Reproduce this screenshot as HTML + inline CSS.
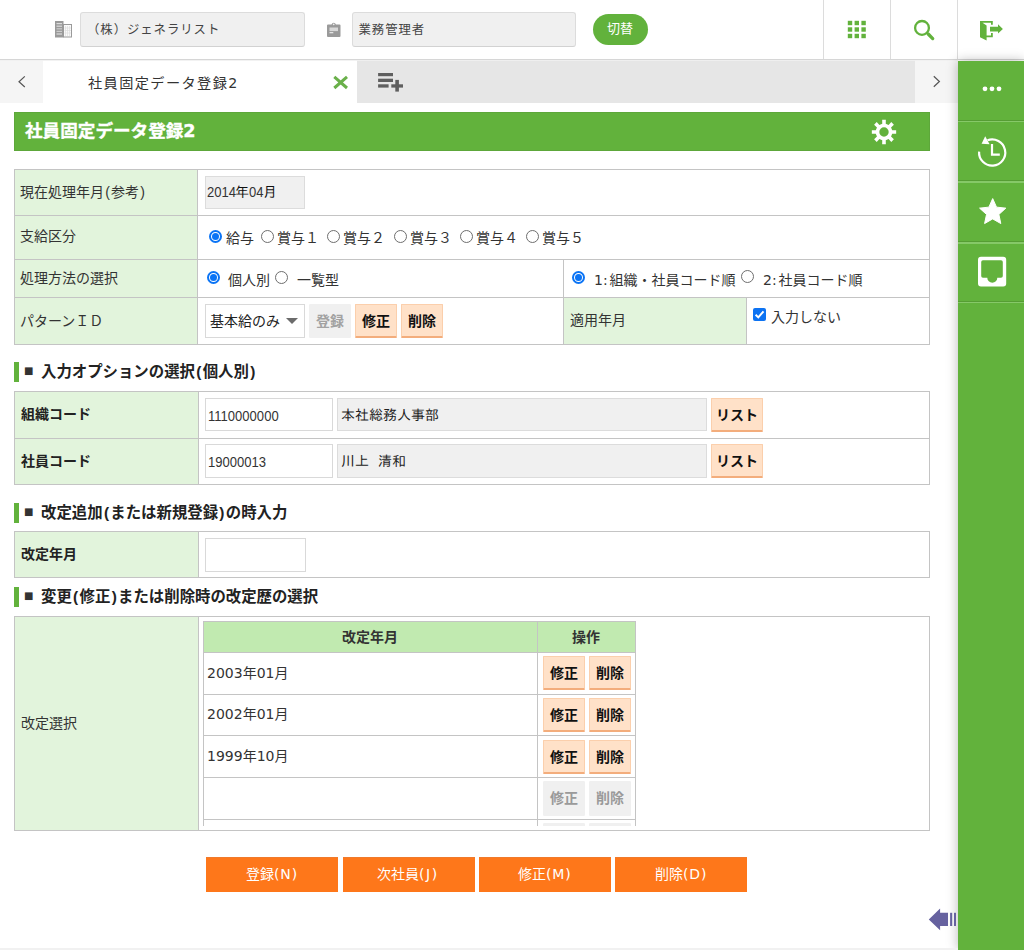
<!DOCTYPE html>
<html lang="ja">
<head>
<meta charset="utf-8">
<title>社員固定データ登録2</title>
<style>
*{box-sizing:border-box;margin:0;padding:0}
html,body{width:1024px;height:950px;overflow:hidden;background:#fff}
body{font-family:"Liberation Sans","Noto Sans CJK JP",sans-serif;font-size:14px;color:#333;position:relative}
.abs{position:absolute}
.t{position:absolute;white-space:nowrap;line-height:1}
/* header */
#hdr{left:0;top:0;width:1024px;height:60px;background:#fff;border-bottom:1px solid #d6d6d6}
.hin{position:absolute;top:12px;height:35px;background:#f0f0f0;border:1px solid #dcdcdc;border-bottom-color:#d2d2d2;border-radius:3px}
.vline{position:absolute;top:0;width:1px;height:59px;background:#dcdcdc}
#sw{left:593px;top:14px;width:55px;height:31px;border-radius:15.5px;background:#62b23c}
/* tabs */
#tabs{left:0;top:60px;width:958px;height:43px;background:#e6e6e6}
#tl{left:0;top:60px;width:43px;height:43px;background:#f5f5f5}
#tr{left:915px;top:60px;width:43px;height:43px;background:#f5f5f5}
#tab1{left:43px;top:60px;width:314px;height:43px;background:#fff}
/* sidebar */
#side{left:958px;top:61px;width:66px;height:889px;background:#62b23c;box-shadow:0 0 11px rgba(0,0,0,0.28)}
#sideshadow{left:938px;top:61px;width:20px;height:889px;background:linear-gradient(to right,rgba(0,0,0,0),rgba(0,0,0,0.10))}
.sdiv{position:absolute;left:958px;width:66px;height:1px;background:#86c868}
.sdiv.dk{background:#569d34}
/* title bar */
#ttl{left:14px;top:112px;width:916px;height:39px;background:#62b23c;border:1px solid #5da73a}
/* tables */
.box{position:absolute;border:1px solid #c4c4c4;background:#fff}
.lab{position:absolute;background:#e2f4dc}
.hl{position:absolute;height:1px;background:#c4c4c4}
.vl{position:absolute;width:1px;background:#c4c4c4}
.inp{position:absolute;background:#fff;border:1px solid #d9d9d9}
.inp.ro{background:#f0f0f0;border-color:#dcdcdc}
.pb{position:absolute;background:#ffe1c8;border:1px solid #fbcfac;border-bottom:2px solid #f3ad7c;border-radius:1px}
.pb.dis{background:#f0f0f0;border:1px solid #f0f0f0}
.ob{position:absolute;top:857px;width:132px;height:35px;background:#fe771a;border-top:1px solid #f07a2c}
.sec{position:absolute;left:14px;width:5px;height:20px;background:#62b23c}
.radio{position:absolute;width:13px;height:13px;border-radius:50%;border:1px solid #6e6e6e;background:#fff}
.radio.on{border:2px solid #0b74f5}
.radio.on::after{content:"";position:absolute;left:1px;top:1px;width:7px;height:7px;border-radius:50%;background:#0b74f5}
.b{font-weight:bold}
.q{letter-spacing:0.9px}
.d{display:inline-block;font-family:"Liberation Sans",sans-serif;font-size:15px;transform:scaleX(0.87);transform-origin:0 50%;color:#333;letter-spacing:0;vertical-align:baseline}
.v{font-family:"DejaVu Sans","Noto Sans CJK JP",sans-serif}
.g{font-family:"IPAGothic","Noto Sans CJK JP",monospace;font-size:14px;color:#222}
.p{display:inline-block;padding:0 1.2px}
.p2{display:inline-block;padding:0 1.3px}
.sq{font-size:10px;color:#333;font-family:"DejaVu Sans",sans-serif}
</style>
</head>
<body>
<!-- HEADER -->
<div id="hdr" class="abs"></div>
<div class="hin" style="left:80px;width:225px"></div>
<div class="hin" style="left:352px;width:224px"></div>
<div class="t" style="left:87px;top:23.5px;font-size:12.4px;letter-spacing:0.93px;color:#444">（株）ジェネラリスト</div>
<div class="t" style="left:358.5px;top:23.5px;font-size:12.4px;letter-spacing:0.93px;color:#444">業務管理者</div>
<div id="sw" class="abs"></div>
<div class="t" style="left:607px;top:22px;font-size:13px;color:#fff">切替</div>
<div class="vline" style="left:823px"></div>
<div class="vline" style="left:890px"></div>
<div class="vline" style="left:957px"></div>

<!-- TABS -->
<div id="tabs" class="abs"></div>
<div id="tl" class="abs"></div>
<div id="tr" class="abs"></div>
<div id="tab1" class="abs"></div>
<div class="abs" style="left:0;top:60px;width:958px;height:1px;background:rgba(240,240,240,0.85)"></div>
<div class="t v" style="left:88px;top:76px;font-size:14.2px;letter-spacing:1.4px;color:#333">社員固定データ登録2</div>

<!-- SIDEBAR -->
<div id="side" class="abs"></div>
<div class="sdiv dk" style="top:120px"></div><div class="sdiv" style="top:121px;height:1px"></div>
<div class="sdiv dk" style="top:180px"></div><div class="sdiv" style="top:181px;height:2px"></div>
<div class="sdiv dk" style="top:241px"></div><div class="sdiv" style="top:242px;height:2px"></div>
<div class="sdiv dk" style="top:301px"></div><div class="sdiv" style="top:302px;height:1px"></div>

<!-- TITLE BAR -->
<div id="ttl" class="abs"></div>
<div class="t b v" style="left:25px;top:123px;font-size:17.6px;color:#fff;-webkit-text-stroke:0.35px #fff">社員固定データ登録2</div>


<!-- FORM TABLE 1 -->
<div class="box" style="left:14px;top:169px;width:916px;height:176px"></div>
<div class="lab" style="left:15px;top:170px;width:182px;height:174px"></div>
<div class="vl" style="left:197px;top:170px;height:174px"></div>
<div class="hl" style="left:15px;top:215px;width:914px"></div>
<div class="hl" style="left:15px;top:259px;width:914px"></div>
<div class="hl" style="left:15px;top:297px;width:914px"></div>
<div class="vl" style="left:563px;top:260px;height:84px"></div>
<div class="lab" style="left:564px;top:298px;width:182px;height:46px"></div>
<div class="vl" style="left:746px;top:298px;height:46px"></div>
<div class="t" style="left:20px;top:185px">現在処理年月<span class="p">(</span>参考<span class="p">)</span></div>
<div class="t" style="left:20px;top:229px">支給区分</div>
<div class="t" style="left:20px;top:271px">処理方法の選択</div>
<div class="t" style="left:20px;top:314px">パターンＩＤ</div>
<div class="t" style="left:570px;top:313px">適用年月</div>
<div class="inp ro" style="left:205px;top:176px;width:100px;height:33px"></div>
<div class="t g" style="left:207px;top:184px;color:#111"><span class="d" style="width:28px">2014</span>年<span class="d" style="width:14px">04</span>月</div>
<!-- row 2 radios -->
<div class="radio on" style="left:209px;top:230px"></div><div class="t" style="left:226px;top:231px">給与</div>
<div class="radio" style="left:261px;top:230px"></div><div class="t" style="left:277px;top:231px">賞与１</div>
<div class="radio" style="left:327px;top:230px"></div><div class="t" style="left:343px;top:231px">賞与２</div>
<div class="radio" style="left:394px;top:230px"></div><div class="t" style="left:410px;top:231px">賞与３</div>
<div class="radio" style="left:460px;top:230px"></div><div class="t" style="left:476px;top:231px">賞与４</div>
<div class="radio" style="left:526px;top:230px"></div><div class="t" style="left:542px;top:231px">賞与５</div>
<!-- row 3 radios -->
<div class="radio on" style="left:207px;top:271px"></div><div class="t" style="left:228px;top:273px">個人別</div>
<div class="radio" style="left:275px;top:271px"></div><div class="t" style="left:297px;top:273px">一覧型</div>
<div class="radio on" style="left:572px;top:271px"></div><div class="t v" style="left:594px;top:273px">1<span style="letter-spacing:1.8px">:</span>組織・社員コード順</div>
<div class="radio" style="left:741px;top:270px"></div><div class="t v" style="left:763px;top:273px">2<span style="letter-spacing:1.8px">:</span>社員コード順</div>
<!-- row 4 -->
<div class="inp" style="left:205px;top:304px;width:100px;height:34px"></div>
<div class="t" style="left:210px;top:314px;color:#222">基本給のみ</div>
<div class="abs" style="left:286px;top:318px;width:0;height:0;border-left:6px solid transparent;border-right:6px solid transparent;border-top:6.5px solid #6b6b6b"></div>
<div class="pb dis" style="left:309px;top:304px;width:42px;height:34px"></div><div class="t b" style="left:316px;top:314px;color:#a2a2a2">登録</div>
<div class="pb" style="left:355px;top:304px;width:42px;height:34px"></div><div class="t b" style="left:362px;top:314px;color:#111">修正</div>
<div class="pb" style="left:401px;top:304px;width:42px;height:34px"></div><div class="t b" style="left:408px;top:314px;color:#111">削除</div>
<!-- checkbox -->
<div class="abs" style="left:753px;top:308px;width:13px;height:13px;border-radius:2px;background:#0d73f2"></div>
<svg class="abs" style="left:753px;top:308px" width="13" height="13" viewBox="0 0 13 13"><path d="M2.6 6.8 L5.3 9.4 L10.5 3.4" fill="none" stroke="#fff" stroke-width="2"/></svg>
<div class="t" style="left:771px;top:310px">入力しない</div>

<!-- SECTION 1 -->
<div class="sec" style="top:362px"></div>
<div class="t b sq" style="left:24px;top:366px">■</div><div class="t b" style="left:41px;top:364px;color:#222;font-size:15.4px">入力オプションの選択<span class="p2">(</span>個人別<span class="p2">)</span></div>
<div class="box" style="left:14px;top:391px;width:916px;height:94px"></div>
<div class="lab" style="left:15px;top:392px;width:183px;height:92px"></div>
<div class="vl" style="left:198px;top:392px;height:92px"></div>
<div class="hl" style="left:15px;top:438px;width:914px"></div>
<div class="t b" style="left:21px;top:407px;color:#222">組織コード</div>
<div class="t b" style="left:21px;top:454px;color:#222">社員コード</div>
<div class="inp" style="left:205px;top:398px;width:128px;height:33px"></div>
<div class="t g" style="left:208px;top:408px"><span class="d">1110000000</span></div>
<div class="inp ro" style="left:337px;top:398px;width:370px;height:33px"></div>
<div class="t g" style="left:341px;top:408px">本社総務人事部</div>
<div class="pb" style="left:711px;top:398px;width:52px;height:34px"></div><div class="t b" style="left:716px;top:408px;color:#111">リスト</div>
<div class="inp" style="left:205px;top:444px;width:128px;height:34px"></div>
<div class="t g" style="left:208px;top:454px"><span class="d">19000013</span></div>
<div class="inp ro" style="left:337px;top:444px;width:370px;height:34px"></div>
<div class="t g" style="left:341px;top:454px;word-spacing:2px">川上 清和</div>
<div class="pb" style="left:711px;top:444px;width:52px;height:34px"></div><div class="t b" style="left:716px;top:454px;color:#111">リスト</div>

<!-- SECTION 2 -->
<div class="sec" style="top:503px"></div>
<div class="t b sq" style="left:24px;top:507px">■</div><div class="t b" style="left:41px;top:505px;color:#222;font-size:15.4px">改定追加<span class="p2">(</span>または新規登録<span class="p2">)</span>の時入力</div>
<div class="box" style="left:14px;top:531px;width:916px;height:47px"></div>
<div class="lab" style="left:15px;top:532px;width:183px;height:45px"></div>
<div class="vl" style="left:198px;top:532px;height:45px"></div>
<div class="t b" style="left:21px;top:547px;color:#222">改定年月</div>
<div class="inp" style="left:205px;top:538px;width:101px;height:34px"></div>

<!-- SECTION 3 -->
<div class="sec" style="top:587px"></div>
<div class="t b sq" style="left:24px;top:591px">■</div><div class="t b" style="left:41px;top:589px;color:#222;font-size:15.4px">変更<span class="p2">(</span>修正<span class="p2">)</span>または削除時の改定歴の選択</div>
<div class="box" style="left:14px;top:616px;width:916px;height:215px"></div>
<div class="lab" style="left:15px;top:617px;width:183px;height:213px"></div>
<div class="vl" style="left:198px;top:617px;height:213px"></div>
<div class="t" style="left:21px;top:716px">改定選択</div>
<!-- inner table -->
<div class="abs" style="left:203px;top:621px;width:433px;height:205px;overflow:hidden">
  <div class="abs" style="left:0;top:0;width:433px;height:32px;background:#c1eab0;border:1px solid #c4c4c4"></div>
  <div class="vl" style="left:334px;top:0;height:205px"></div>
  <div class="vl" style="left:432px;top:0;height:205px"></div>
  <div class="vl" style="left:0;top:0;height:205px"></div>
  <div class="hl" style="left:0;top:73px;width:433px"></div>
  <div class="hl" style="left:0;top:114px;width:433px"></div>
  <div class="hl" style="left:0;top:156px;width:433px"></div>
  <div class="hl" style="left:0;top:198px;width:433px"></div>
  <div class="t b" style="left:139px;top:9px;color:#333">改定年月</div>
  <div class="t b" style="left:369px;top:9px;color:#333">操作</div>
  <div class="t v" style="left:4px;top:45px">2003年01月</div>
  <div class="t v" style="left:4px;top:86px">2002年01月</div>
  <div class="t v" style="left:4px;top:128px">1999年10月</div>
  <div class="pb" style="left:340px;top:35px;width:42px;height:34px"></div><div class="t b" style="left:347px;top:45px;color:#111">修正</div>
  <div class="pb" style="left:386px;top:35px;width:42px;height:34px"></div><div class="t b" style="left:393px;top:45px;color:#111">削除</div>
  <div class="pb" style="left:340px;top:77px;width:42px;height:34px"></div><div class="t b" style="left:347px;top:87px;color:#111">修正</div>
  <div class="pb" style="left:386px;top:77px;width:42px;height:34px"></div><div class="t b" style="left:393px;top:87px;color:#111">削除</div>
  <div class="pb" style="left:340px;top:119px;width:42px;height:34px"></div><div class="t b" style="left:347px;top:129px;color:#111">修正</div>
  <div class="pb" style="left:386px;top:119px;width:42px;height:34px"></div><div class="t b" style="left:393px;top:129px;color:#111">削除</div>
  <div class="pb dis" style="left:340px;top:160px;width:42px;height:35px"></div><div class="t b" style="left:347px;top:170px;color:#9a9a9a">修正</div>
  <div class="pb dis" style="left:386px;top:160px;width:42px;height:35px"></div><div class="t b" style="left:393px;top:170px;color:#9a9a9a">削除</div>
  <div class="pb dis" style="left:340px;top:202px;width:42px;height:35px"></div>
  <div class="pb dis" style="left:386px;top:202px;width:42px;height:35px"></div>
</div>

<!-- BOTTOM BUTTONS -->
<div class="ob" style="left:206px"></div><div class="t v" style="left:246px;top:867px;color:#fff;font-size:14px">登録<span class="q">(N)</span></div>
<div class="ob" style="left:343px"></div><div class="t v" style="left:377px;top:867px;color:#fff;font-size:14px">次社員<span class="q" style="letter-spacing:1.6px">(J)</span></div>
<div class="ob" style="left:479px"></div><div class="t v" style="left:518px;top:867px;color:#fff;font-size:14px">修正<span class="q">(M)</span></div>
<div class="ob" style="left:615px"></div><div class="t v" style="left:655px;top:867px;color:#fff;font-size:14px">削除<span class="q">(D)</span></div>

<!-- bottom line -->
<div class="abs" style="left:0;top:948px;width:958px;height:2px;background:#f1f1f1"></div>


<!-- ICONS -->
<svg class="abs" style="left:0;top:0" width="1024" height="950" viewBox="0 0 1024 950">
  <!-- building -->
  <g>
    <rect x="55" y="21" width="8.5" height="16.5" fill="#9a9a9a"/>
    <rect x="56.5" y="23" width="5.5" height="1.2" fill="#ddd"/>
    <rect x="56.5" y="25.6" width="5.5" height="1.2" fill="#ddd"/>
    <rect x="56.5" y="28.2" width="5.5" height="1.2" fill="#ccc"/>
    <rect x="56.5" y="30.8" width="5.5" height="1.2" fill="#ccc"/>
    <rect x="56.5" y="33.4" width="5.5" height="1.2" fill="#ddd"/>
    <rect x="63.5" y="24.5" width="8" height="12.5" fill="#fafafa" stroke="#9a9a9a" stroke-width="1"/>
    <path d="M65.5 26v10 M67.5 26v10 M69.5 26v10 M64.5 28h6.5 M64.5 30.5h6.5 M64.5 33h6.5" stroke="#dcdcdc" stroke-width="0.7" fill="none"/>
  </g>
  <!-- clipboard -->
  <g>
    <path d="M328 24.5 h3.5 a2.3 2.3 0 0 1 4.4 0 h3.6 a1 1 0 0 1 1 1 v10.5 a1 1 0 0 1 -1 1 h-11.5 a1 1 0 0 1 -1 -1 v-10.5 a1 1 0 0 1 1 -1z" fill="#9a9a9a"/>
    <circle cx="333.7" cy="24.3" r="0.9" fill="#eee"/>
    <rect x="329.5" y="27.5" width="8.5" height="3.6" fill="#d8d8d8"/>
    <rect x="329.5" y="32" width="3.8" height="1.3" fill="#e4e4e4"/>
  </g>
  <!-- grid -->
  <g fill="#62b23c">
    <rect x="847.8" y="20.8" width="4.4" height="4.4"/><rect x="854.6" y="20.8" width="4.4" height="4.4"/><rect x="861.4" y="20.8" width="4.4" height="4.4"/>
    <rect x="847.8" y="27.3" width="4.4" height="4.4"/><rect x="854.6" y="27.3" width="4.4" height="4.4"/><rect x="861.4" y="27.3" width="4.4" height="4.4"/>
    <rect x="847.8" y="33.8" width="4.4" height="4.4"/><rect x="854.6" y="33.8" width="4.4" height="4.4"/><rect x="861.4" y="33.8" width="4.4" height="4.4"/>
  </g>
  <!-- search -->
  <circle cx="922" cy="27.9" r="6.9" fill="none" stroke="#62b23c" stroke-width="2.3"/>
  <path d="M928.2 34 L932.7 38.6" stroke="#62b23c" stroke-width="3.3" stroke-linecap="round" fill="none"/>
  <!-- logout -->
  <g fill="#62b23c">
    <path d="M980 21 H992.8 V24.7 H991 V22.8 H982.5 L986.6 25.4 V35.4 H991 V33.1 H992.8 V37.2 H986.6 V40.6 L980 37.2Z"/>
    <path d="M990 26.7 H998 V24.3 L1002.9 29 L998 33.5 V31.4 H990Z"/>
  </g>
  <!-- left / right chevrons -->
  <path d="M24.8 76.4 L19 81.7 L24.8 87" stroke="#555" stroke-width="1.2" fill="none"/>
  <path d="M933.8 76.2 L939.4 81.5 L933.8 86.8" stroke="#555" stroke-width="1.2" fill="none"/>
  <!-- tab close -->
  <path d="M334.3 76.8 L347 88 M347 76.8 L334.3 88" stroke="#6ab04a" stroke-width="3" fill="none"/>
  <!-- playlist add -->
  <g fill="#5f5f5f">
    <rect x="378.1" y="73" width="14.9" height="3.2"/>
    <rect x="378.1" y="78.7" width="14.9" height="3.3"/>
    <rect x="378.1" y="84.3" width="10.5" height="3.3"/>
    <rect x="391.3" y="84.3" width="11.7" height="3.3"/>
    <rect x="395.3" y="79.9" width="3.6" height="11.7"/>
  </g>
  <!-- gear -->
  <path d="M882.25 123.78 L882.16 119.84 L885.84 119.84 L885.75 123.78 L888.57 124.95 L891.30 122.10 L893.90 124.70 L891.05 127.43 L892.22 130.25 L896.16 130.16 L896.16 133.84 L892.22 133.75 L891.05 136.57 L893.90 139.30 L891.30 141.90 L888.57 139.05 L885.75 140.22 L885.84 144.16 L882.16 144.16 L882.25 140.22 L879.43 139.05 L876.70 141.90 L874.10 139.30 L876.95 136.57 L875.78 133.75 L871.84 133.84 L871.84 130.16 L875.78 130.25 L876.95 127.43 L874.10 124.70 L876.70 122.10 L879.43 124.95Z M888.70 132.00 A4.7 4.7 0 1 0 879.30 132.00 A4.7 4.7 0 1 0 888.70 132.00Z" fill="#fff" fill-rule="evenodd"/>
  <!-- dots -->
  <circle cx="985" cy="88.8" r="2.4" fill="#fff"/><circle cx="992" cy="88.8" r="2.4" fill="#fff"/><circle cx="999" cy="88.8" r="2.4" fill="#fff"/>
  <!-- history -->
  <path d="M979.1 151.6 A13.1 13.1 0 1 0 987.5 140.3" stroke="#fff" stroke-width="2.2" fill="none"/>
  <path d="M985.2 136.2 L981.6 143.7 L989.6 144.2Z" fill="#fff"/>
  <path d="M992 144 V154.6 H999.8" stroke="#fff" stroke-width="2.2" fill="none"/>
  <!-- star -->
  <path d="M992.70 198.60 L996.52 207.14 L1005.82 208.14 L998.88 214.41 L1000.81 223.56 L992.70 218.90 L984.59 223.56 L986.52 214.41 L979.58 208.14 L988.88 207.14Z" fill="#fff" stroke="#fff" stroke-width="1" stroke-linejoin="round"/>
  <!-- inbox -->
  <path fill-rule="evenodd" fill="#fff" d="M981 256.7 H1003.2 A3 3 0 0 1 1006.2 259.7 V283.4 A3 3 0 0 1 1003.2 286.4 H981 A3 3 0 0 1 978 283.4 V259.7 A3 3 0 0 1 981 256.7Z
   M983 260.2 A1.8 1.8 0 0 0 981.2 262 V276 A1.8 1.8 0 0 0 983 277.8 H987.3 A5 5 0 0 0 997.3 277.8 H1001 A1.8 1.8 0 0 0 1002.8 276 V262 A1.8 1.8 0 0 0 1001 260.2Z"/>
  <!-- purple arrow -->
  <g fill="#66629f">
    <path d="M928.8 919.4 L940.1 908.6 V912.8 H948 V926 H940.1 V930.2Z"/>
    <rect x="950.1" y="912.8" width="2.1" height="13.2"/>
    <rect x="954" y="912.8" width="2" height="13.2"/>
  </g>
</svg>

</body>
</html>
